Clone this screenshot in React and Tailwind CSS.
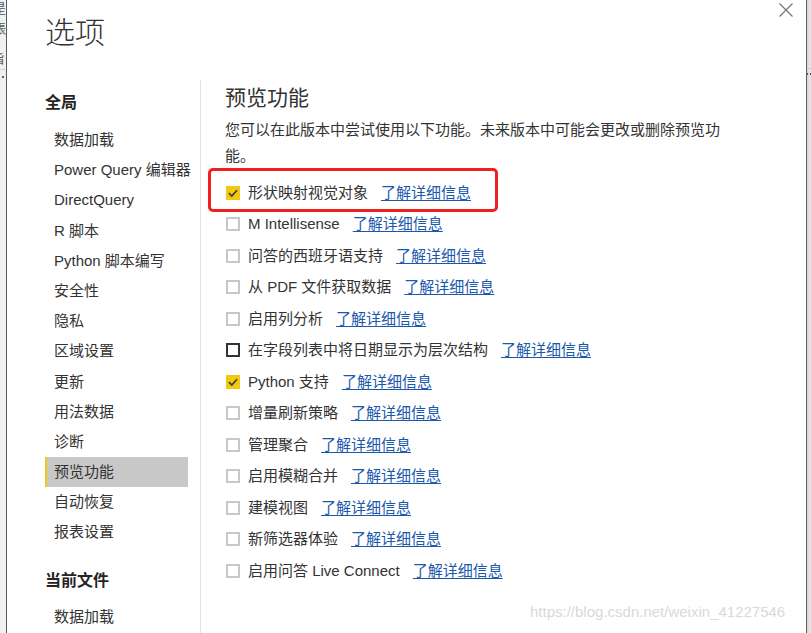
import React from "react";

const FONT = { fontFamily: '"Liberation Sans", "Noto Sans CJK SC", sans-serif' };

const navGlobal = [
  "数据加载",
  "Power Query 编辑器",
  "DirectQuery",
  "R 脚本",
  "Python 脚本编写",
  "安全性",
  "隐私",
  "区域设置",
  "更新",
  "用法数据",
  "诊断",
  "预览功能",
  "自动恢复",
  "报表设置",
];

const features = [
  { label: "形状映射视觉对象", state: "checked" },
  { label: "M Intellisense", state: "off" },
  { label: "问答的西班牙语支持", state: "off" },
  { label: "从 PDF 文件获取数据", state: "off" },
  { label: "启用列分析", state: "off" },
  { label: "在字段列表中将日期显示为层次结构", state: "focus" },
  { label: "Python 支持", state: "checked" },
  { label: "增量刷新策略", state: "off" },
  { label: "管理聚合", state: "off" },
  { label: "启用模糊合并", state: "off" },
  { label: "建模视图", state: "off" },
  { label: "新筛选器体验", state: "off" },
  { label: "启用问答 Live Connect", state: "off" },
];

function Checkbox({ state }) {
  if (state === "checked") {
    return (
      <span className="w-[14px] h-[14px] bg-[#f2c811] flex items-center justify-center shrink-0">
        <svg width="14" height="14" viewBox="0 0 14 14">
          <polyline points="3,7.2 5.8,10 11,4.2" fill="none" stroke="#3a3a3a" strokeWidth="1.7" />
        </svg>
      </span>
    );
  }
  if (state === "focus") {
    return <span className="w-[14px] h-[14px] border-2 border-[#333333] bg-white shrink-0" />;
  }
  return <span className="w-[14px] h-[14px] border-2 border-[#c8c8c8] bg-white shrink-0" />;
}

export default function App() {
  return (
    <div className="relative w-[811px] h-[633px] overflow-hidden flex bg-white text-[#333333]" style={FONT}>
      {/* background window fragment on the left */}
      <div className="w-[6px] h-full bg-[#f0f0f0] overflow-hidden flex flex-col text-[13px] text-[#555] shrink-0">
        <span className="block -ml-[7px] leading-[16px] mt-[1px]">昰</span>
        <span className="block -ml-[7px] leading-[16px] mt-[4px]">賬</span>
        <span className="block -ml-[9px] leading-[16px] mt-[14px]">指</span>
        <div className="h-px bg-[#d4d4d4] mt-[2px]" />
        <div className="w-[2px] h-[2px] bg-[#666] ml-[2px] mt-[6px]" />
      </div>
      <div className="w-px h-full bg-[#5a5a5a] shrink-0" />

      {/* dialog */}
      <div className="flex-1 flex flex-col bg-white">
        <div className="pl-[38px] pt-[10px] h-[40px] box-content text-[30px] leading-[40px] font-light text-[#333]" style={{ fontFamily: '"Noto Sans CJK SC", sans-serif' }}>
          选项
        </div>
        <div className="flex flex-1 mt-[30px]">
          {/* sidebar */}
          <div className="pl-[38px] w-[155px] box-content pt-[11px]">
            <div className="text-[16px] leading-[24px] font-bold text-[#252423]">全局</div>
            <div className="mt-[10px] w-[143px] flex flex-col">
              {navGlobal.map((t) =>
                t === "预览功能" ? (
                  <div key={t} className="h-[30.2px] leading-[30px] text-[15px] bg-[#c8c8c8] border-l-2 border-[#f2c811] pl-[7px] whitespace-nowrap">
                    {t}
                  </div>
                ) : (
                  <div key={t} className="h-[30.2px] leading-[30px] text-[15px] pl-[9px] whitespace-nowrap">
                    {t}
                  </div>
                )
              )}
            </div>
            <div className="mt-[21px] text-[16px] leading-[24px] font-bold text-[#252423]">当前文件</div>
            <div className="mt-[9px] h-[30px] leading-[30px] text-[15px] pl-[9px]">数据加载</div>
          </div>
          <div className="w-px bg-[#e3e3e3] self-stretch" />

          {/* content */}
          <div className="pl-[24px] pt-[6px] flex flex-col">
            <div className="text-[21px] leading-[24px] text-[#333]">预览功能</div>
            <div className="mt-[7px] w-[540px] text-[15px] leading-[26px] text-[#333]">
              您可以在此版本中尝试使用以下功能。未来版本中可能会更改或删除预览功
              <br />
              能。
            </div>
            <div className="mt-[8px] flex flex-col">
              {features.map((f) => (
                <div key={f.label} className="h-[31.5px] flex items-center pl-[1px] text-[15px] whitespace-nowrap">
                  <Checkbox state={f.state} />
                  <span className="ml-[8px] text-[#333]">{f.label}</span>
                  <span className="ml-[13px] text-[#1a58ac] underline underline-offset-2">了解详细信息</span>
                </div>
              ))}
            </div>
          </div>
        </div>
      </div>

      <div className="w-px h-full bg-[#5f5f5f] shrink-0" />
      <div className="w-[4px] h-full bg-gradient-to-r from-[#d6d6d6] to-[#ececec] shrink-0 flex flex-col">
        <div className="h-px bg-[#c8c8c8] mt-[68px]" />
        <div className="flex gap-[1px] mt-[4px]">
          <div className="w-[1px] h-[2px] bg-[#555]" />
          <div className="w-[1px] h-[2px] bg-[#555] ml-[1px]" />
        </div>
      </div>

      {/* close button */}
      <div className="absolute top-[3px] left-[779px] w-[14px] h-[14px]">
        <svg width="14" height="14" viewBox="0 0 14 14">
          <path d="M0.5 0.5 L13.5 13.5 M13.5 0.5 L0.5 13.5" stroke="#707070" strokeWidth="1.1" />
        </svg>
      </div>

      {/* red annotation box */}
      <div className="absolute left-[208px] top-[168px] w-[290px] h-[44px] border-[3px] border-[#f02020] rounded-[5px]" />

      {/* watermark */}
      <div className="absolute left-[530px] top-[602px] text-[15px] leading-[20px] text-[#d9d9d9] whitespace-nowrap">
        https://blog.csdn.net/weixin_41227546
      </div>
    </div>
  );
}
